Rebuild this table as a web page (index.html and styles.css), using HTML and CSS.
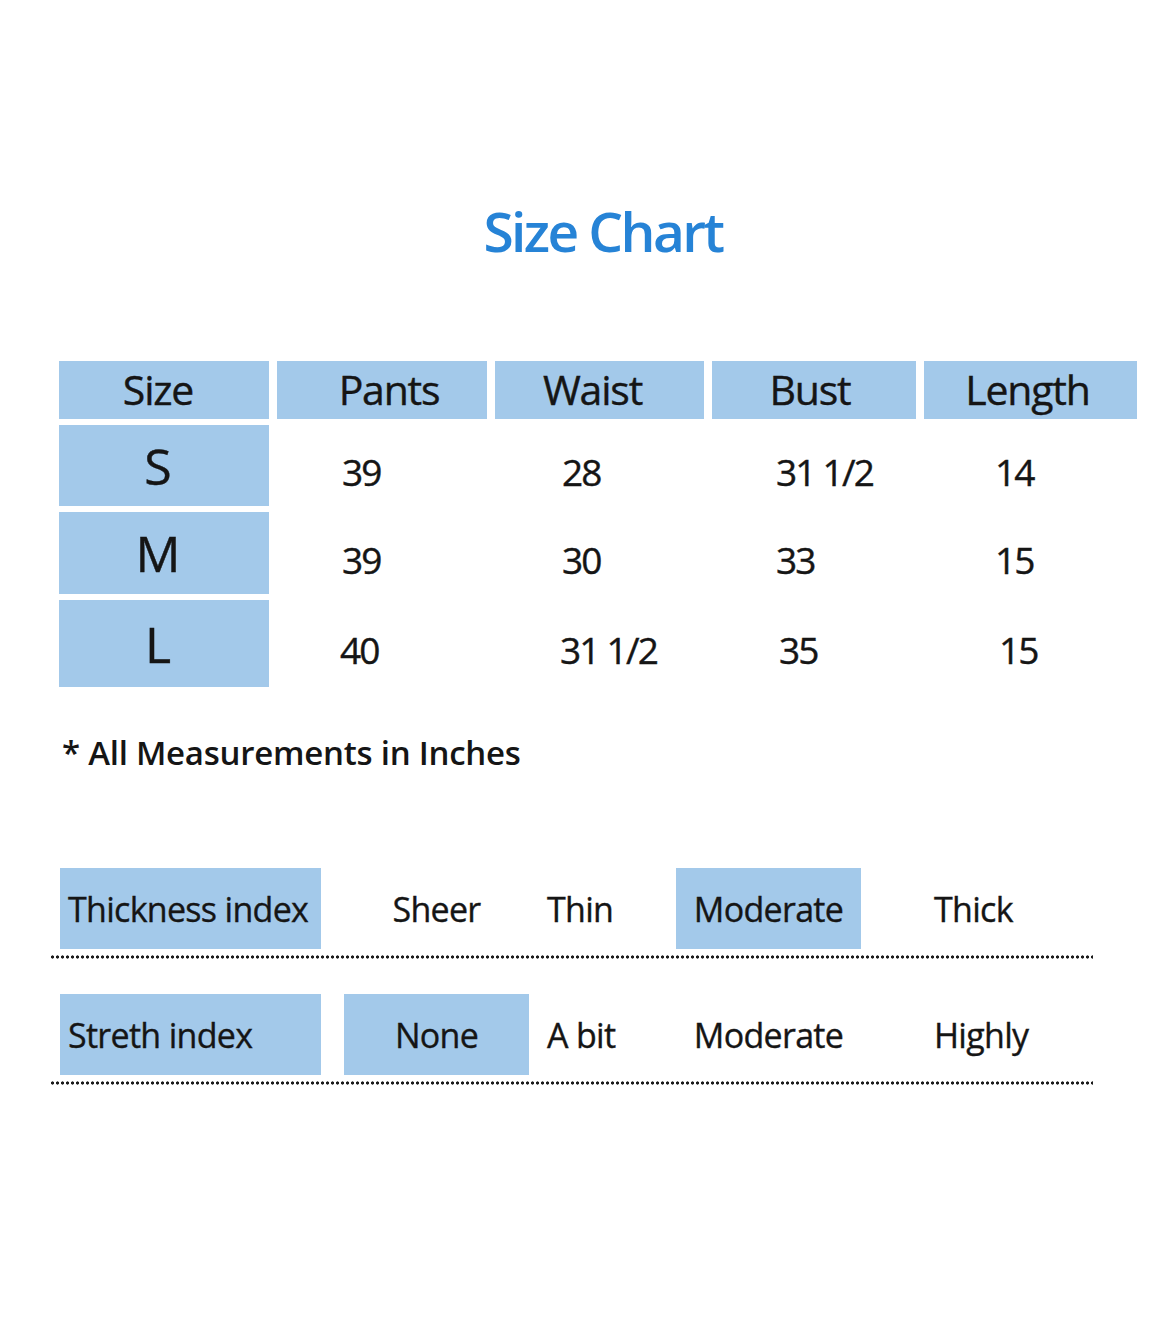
FILE: index.html
```html
<!DOCTYPE html>
<html lang="en">
<head>
<meta charset="utf-8">
<title>Size Chart</title>
<link rel="stylesheet" href="styles.css">
</head>
<body>
<main class="page">
  <h1 class="title">Size Chart</h1>

  <div class="chart">
    <div class="hcell">Size</div>
    <div class="hcell">Pants</div>
    <div class="hcell">Waist</div>
    <div class="hcell">Bust</div>
    <div class="hcell">Length</div>

    <div class="scell">S</div>
    <div class="dcell c1">39</div>
    <div class="dcell c2">28</div>
    <div class="dcell c3">31 1/2</div>
    <div class="dcell c4">14</div>

    <div class="scell">M</div>
    <div class="dcell c1">39</div>
    <div class="dcell c2">30</div>
    <div class="dcell c3">33</div>
    <div class="dcell c4">15</div>

    <div class="scell">L</div>
    <div class="dcell c1 r3">40</div>
    <div class="dcell c2 r3">31 1/2</div>
    <div class="dcell c3 r3">35</div>
    <div class="dcell c4 r3">15</div>
  </div>

  <p class="note">* All Measurements in Inches</p>

  <div class="index">
    <div class="irow">
      <div class="ilabel">Thickness index</div>
      <div class="iopt center">Sheer</div>
      <div class="iopt left">Thin</div>
      <div class="iopt center on">Moderate</div>
      <div class="iopt far">Thick</div>
    </div>
    <div class="dots"></div>
    <div class="irow">
      <div class="ilabel">Streth index</div>
      <div class="iopt center on">None</div>
      <div class="iopt left">A bit</div>
      <div class="iopt center">Moderate</div>
      <div class="iopt far">Highly</div>
    </div>
    <div class="dots"></div>
  </div>
</main>
</body>
</html>
```

FILE: styles.css
```css
html, body {
  margin: 0;
  padding: 0;
  background: #ffffff;
}

body {
  font-family: "Open Sans", "Noto Sans", "Liberation Sans", sans-serif;
  color: #151515;
  width: 1170px;
  height: 1336px;
  overflow: hidden;
}

.page {
  padding-top: 192px;
}

.title {
  margin: 0;
  text-align: center;
  font-size: 55px;
  font-weight: 600;
  color: #2683d6;
  line-height: 78px;
  letter-spacing: -2.6px;
  padding-left: 36px;
}

.chart {
  margin: 91px 0 0 59px;
  display: grid;
  grid-template-columns: 210px 210px 209px 204px 213px;
  grid-template-rows: 58px 81px 82px 87px;
  column-gap: 8px;
  row-gap: 6px;
  -webkit-text-stroke: 0.4px #151515;
}

.hcell {
  background: #a3c9ea;
  display: flex;
  align-items: center;
  justify-content: center;
  font-size: 41px;
  letter-spacing: -1.2px;
  padding-bottom: 2px;
}

.hcell:nth-child(1) { padding-right: 12px; }
.hcell:nth-child(2) { padding-left: 14px; }
.hcell:nth-child(3) { padding-right: 14px; }
.hcell:nth-child(4) { padding-right: 8px; }
.hcell:nth-child(5) { padding-right: 6px; }

.scell {
  background: #a3c9ea;
  display: flex;
  align-items: center;
  justify-content: center;
  font-size: 50px;
  padding-right: 12px;
}

.dcell {
  display: flex;
  align-items: center;
  font-size: 37px;
  letter-spacing: -1.8px;
  padding-top: 12px;
}

.c1 { padding-left: 65px; }
.c2 { padding-left: 67px; }
.c3 { padding-left: 64px; }
.c4 { padding-left: 71px; }
.r3.c1 { padding-left: 63px; }
.r3.c2 { padding-left: 65px; }
.r3.c3 { padding-left: 67px; }
.r3.c4 { padding-left: 75px; }

.note {
  margin: 44px 0 0 62px;
  font-size: 33px;
  font-weight: 600;
  line-height: 44px;
  letter-spacing: -0.25px;
}

.index {
  margin: 93px 0 0 50px;
  width: 1043px;
}

.irow {
  display: grid;
  grid-template-columns: 284px 185px 147px 185px 1fr;
  height: 81px;
  padding-left: 10px;
  font-size: 34px;
  letter-spacing: -0.7px;
  -webkit-text-stroke: 0.35px #151515;
}

.ilabel {
  width: 261px;
  background: #a3c9ea;
  display: flex;
  align-items: center;
  padding-left: 8px;
  box-sizing: border-box;
}

.iopt {
  display: flex;
  align-items: center;
}

.iopt.center { justify-content: center; }
.iopt.left { padding-left: 18px; }
.iopt.far { padding-left: 73px; }
.iopt.on { background: #a3c9ea; }

.dots {
  height: 4px;
  margin: 6px 0 35px;
  background-image: radial-gradient(circle, #1c1c1c 1.3px, transparent 1.9px);
  background-size: 5px 4px;
  background-repeat: repeat-x;
}
```
